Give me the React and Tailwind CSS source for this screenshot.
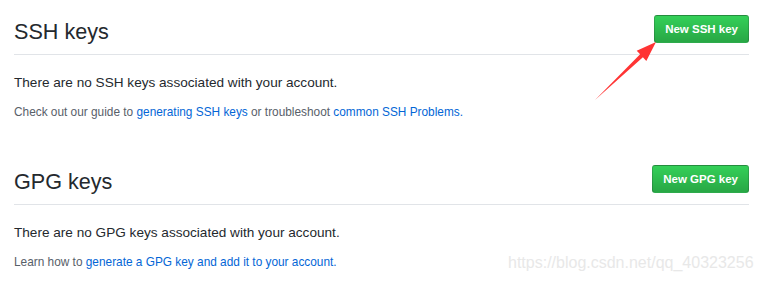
import React from 'react'

function KeyHeader({ title, button }) {
  return (
    <div className="flex items-start justify-between border-b border-[#e1e4e8] pb-[11px]">
      <h2 className="pt-[5px] text-[21.6px] leading-[23px] font-normal text-[#24292e]">{title}</h2>
      <button className="h-[28px] px-[10px] rounded-[3px] border border-[rgba(27,31,35,0.2)] bg-gradient-to-b from-[#34d058] to-[#28a745] text-white text-[11.5px] font-bold leading-[26px]">
        {button}
      </button>
    </div>
  )
}

function KeySection({ title, button, empty, children, className = '' }) {
  return (
    <section className={className}>
      <KeyHeader title={title} button={button} />
      <p className="mt-[17px] text-[13.6px] leading-[21px] text-[#24292e]">{empty}</p>
      <p className="mt-[10px] text-[11.85px] leading-[18px] text-[#586069]">{children}</p>
    </section>
  )
}

export default function App() {
  return (
    <div className="relative w-[761px] h-[283px] bg-white overflow-hidden font-['Segoe_UI','Liberation_Sans',Arial,sans-serif]">
      <div className="pl-[14px] pr-[12px] pt-[15px]">
        <KeySection
          title="SSH keys"
          button="New SSH key"
          empty="There are no SSH keys associated with your account."
        >
          Check out our guide to <a className="text-[#0366d6]">generating SSH keys</a> or troubleshoot{' '}
          <a className="text-[#0366d6]">common SSH Problems.</a>
        </KeySection>

        <KeySection
          className="mt-[44px]"
          title="GPG keys"
          button="New GPG key"
          empty="There are no GPG keys associated with your account."
        >
          Learn how to <a className="text-[#0366d6]">generate a GPG key and add it to your account.</a>
        </KeySection>
      </div>

      {/* annotation arrow */}
      <svg className="absolute left-0 top-0 pointer-events-none" width="761" height="283">
        <polygon
          fill="#ff3434"
          points="595,100 642.9,57.3 646.3,60.9 656,42 636.7,50.7 640.1,54.3"
        />
      </svg>

      <div className="absolute left-[508px] top-[253px] text-[16px] leading-[20px] text-[#e8e8e8] font-['Liberation_Sans',Arial,sans-serif]">
        https://blog.csdn.net/qq_40323256
      </div>
    </div>
  )
}
